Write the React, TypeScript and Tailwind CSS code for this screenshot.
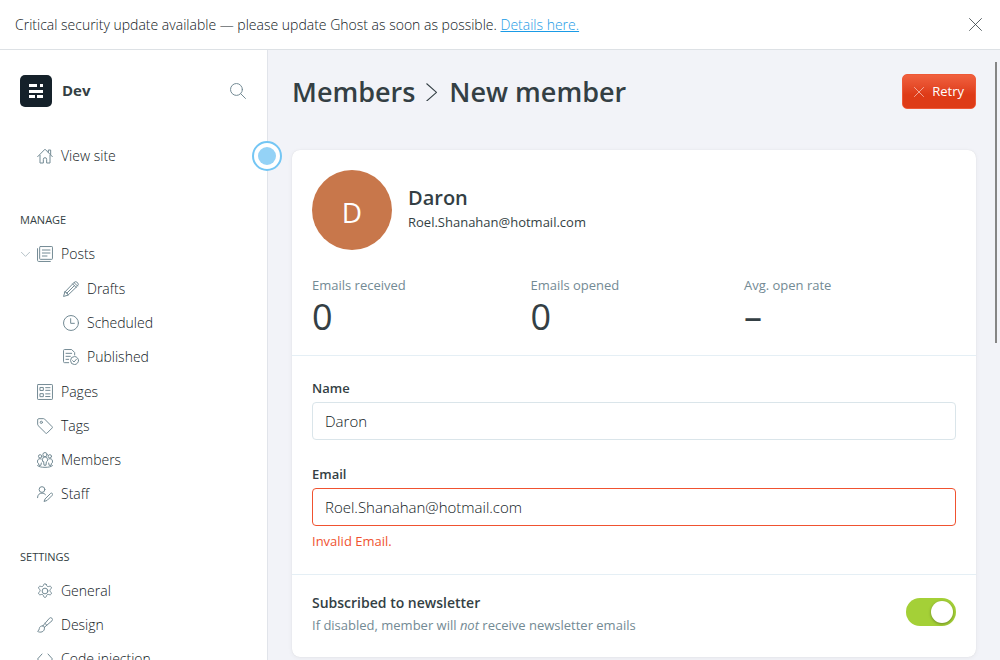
import { useState } from 'react';
import type { ReactNode } from 'react';

function Icon({ children, className = 'size-4 text-[#738a94]' }: { children: ReactNode; className?: string }) {
  return (
    <svg
      viewBox="0 0 24 24"
      className={`shrink-0 ${className}`}
      fill="none"
      stroke="currentColor"
      strokeWidth="1.5"
      strokeLinecap="round"
      strokeLinejoin="round"
      aria-hidden="true"
    >
      {children}
    </svg>
  );
}

const icons = {
  home: (
    <>
      <path d="M1 13 12 1.800 23 13" />
      <path d="M4.500 11v11.500h5V17a2.500 2.500 0 0 1 5 0v5.500h5V11" />
      <path d="M17 6.500V3h3.500v7" />
    </>
  ),
  posts: (
    <>
      <rect x="4" y=".8" width="19.200" height="19.200" rx="1" />
      <path d="M20 23.200H2.500A1.700 1.700 0 0 1 .8 21.500V4M8 6h11.500M8 10.500h11.500M8 15h7" />
    </>
  ),
  drafts: (
    <>
      <path d="m2.800 16.500 13.700-14.200a3.600 3.600 0 0 1 5.200 0 3.600 3.600 0 0 1 0 5.200L7.500 21.200l-6.700 2 2-6.700Z" />
      <path d="m14.500 4.400 5.200 5.200M2.800 16.500c2.500 0 4.700 2 4.700 4.700M5.500 18.500 17 7M16.500 2.300l5.200 5.200" />
    </>
  ),
  scheduled: (
    <>
      <circle cx="12" cy="12" r="11.200" />
      <path d="M11.500 5.500v7h5.500" />
    </>
  ),
  published: (
    <>
      <path d="M8.500 20.500H2.300A1.500 1.500 0 0 1 .8 19V2.300A1.500 1.500 0 0 1 2.300.8H13l4.500 4.500V9" />
      <path d="M4.500 6.500h8.500M4.500 11h6.500M4.500 15.500h4" />
      <circle cx="17.300" cy="17.300" r="6" />
      <path d="m14.500 17.500 2 2 3.700-4.200" />
    </>
  ),
  pages: (
    <>
      <rect x=".8" y=".8" width="22.400" height="22.400" rx="1" />
      <path d="M5 5.200h4.500v4.500H5zM5 14.500h4.500V19H5zM13 5.500h6.500M13 9.500h6.500M13 14.800h6.500M13 18.800h6.500" />
    </>
  ),
  tags: (
    <>
      <path d="M1 2.500A1.500 1.500 0 0 1 2.500 1H10a2 2 0 0 1 1.400.6L22.600 13a1.500 1.500 0 0 1 0 2.100l-7.500 7.500a1.500 1.500 0 0 1-2.100 0L1.600 11.300A2 2 0 0 1 1 9.900Z" />
      <circle cx="6.500" cy="6.500" r="1.700" />
    </>
  ),
  members: (
    <>
      <circle cx="12" cy="4" r="3.200" />
      <path d="M8.300 13.500V11a3.700 3.700 0 0 1 7.400 0v2.500l-1.700 1.300-.5 5h-3l-.5-5Z" />
      <circle cx="4.700" cy="6.500" r="2.500" />
      <circle cx="19.300" cy="6.500" r="2.500" />
      <path d="M6.500 10.500c-2.600-1.500-5.700.2-5.700 3V16l1.500 1 .5 3h3l.7-3.500M17.500 10.500c2.600-1.500 5.700.2 5.700 3V16l-1.500 1-.5 3h-3l-.7-3.500M.8 20.500c2 1.700 6 2.500 11.200 2.500s9.200-.8 11.200-2.500" />
    </>
  ),
  staff: (
    <>
      <circle cx="7.500" cy="5.300" r="4.300" />
      <path d="M.8 17.500c0-4.500 3-6.800 6.700-6.800 2.300 0 4 .9 5.200 2.300" />
      <path d="m12.500 19 8-8a1.900 1.900 0 0 1 2.600 2.700l-8 8-4 1.300Z" />
    </>
  ),
  general: (
    <>
      <circle cx="12" cy="12" r="4.300" />
      <path d="m13.900 2.300.7 1.700a2.300 2.300 0 0 0 2.700 1.300l1.800-.4a2.100 2.100 0 0 1 2 3.400l-1.200 1.500a2.300 2.300 0 0 0 0 2.900l1.200 1.500a2.100 2.100 0 0 1-2 3.400l-1.800-.4a2.300 2.300 0 0 0-2.700 1.300l-.7 1.900a2.100 2.100 0 0 1-3.800 0l-.7-1.900a2.300 2.300 0 0 0-2.700-1.300l-1.800.4a2.100 2.100 0 0 1-2-3.400l1.200-1.500a2.300 2.300 0 0 0 0-2.900L2.900 8.300a2.100 2.100 0 0 1 2-3.400l1.800.4A2.300 2.300 0 0 0 9.400 4l.7-1.700a2.100 2.100 0 0 1 3.800 0Z" />
    </>
  ),
  design: (
    <>
      <path d="M8.800 13.300 18.500 2a2.700 2.700 0 0 1 4 3.700L11 15.500" />
      <path d="M8.800 13.300c1.500.2 2.300 1.200 2.400 2.600M8.800 13.300c-3-.2-5 1.300-5.300 4-.2 1.900-1 3.300-2.600 4.200 3.500 2.500 11.200 1.400 10.300-5.600M12 9.700l2.800 2.700" />
    </>
  ),
  code: <path d="M7.500 4.500.8 12l6.700 7.500M16.500 4.500l6.700 7.500-6.700 7.500" />,
};

function NavItem({ icon, label, nested, expandable }: { icon: ReactNode; label: string; nested?: boolean; expandable?: boolean }) {
  return (
    <li className={`flex h-[34px] items-center ${nested ? 'pl-[63px]' : 'pl-[37px]'}`}>
      {expandable && (
        <button type="button" aria-label="Toggle posts" className="-ml-4 flex w-4 items-center">
          <Icon className="h-[9px] w-[9px] text-[#aebbc2]">
            <path d="m1 6 11 11L23 6" strokeWidth="2.400" />
          </Icon>
        </button>
      )}
      <a href="#" className="flex items-center gap-2">
        <Icon>{icon}</Icon>
        <span className="font-light text-[#10181c]">{label}</span>
      </a>
    </li>
  );
}

function Stat({ label, value }: { label: string; value: string }) {
  return (
    <div className="flex-auto">
      <dt className="text-[13px] leading-5 text-[#738a94]">{label}</dt>
      <dd className="mt-[2px] text-4xl leading-10">{value}</dd>
    </div>
  );
}

export default function App() {
  const [name, setName] = useState('Daron');
  const [email, setEmail] = useState('Roel.Shanahan@hotmail.com');
  const [subscribed, setSubscribed] = useState(true);

  return (
    <div className="flex h-screen flex-col overflow-hidden bg-white font-['Open_Sans','Noto_Sans',sans-serif] text-sm text-[#343f44]">
      <div className="flex h-[50px] shrink-0 items-center justify-between border-b border-[#dde1e5] px-[15px]">
        <p className="font-light text-[#10181c]">
          Critical security update available — please update Ghost as soon as possible.{' '}
          <a href="#" className="text-[#1a9be6] underline">Details here.</a>
        </p>
        <button type="button" aria-label="Close" className="flex size-5 items-center justify-center">
          <Icon className="size-[13px] text-[#343f44]">
            <path d="m1 1 22 22M23 1 1 23" strokeWidth="1.500" />
          </Icon>
        </button>
      </div>

      <div className="relative flex min-h-0 flex-1">
        <aside className="relative w-[268px] shrink-0 border-r border-[#e1e4ea]">
          <nav className="h-full overflow-y-auto pt-[25px] [scrollbar-width:none]">
            <div className="flex items-center pr-[21px] pl-5">
              <svg viewBox="0 0 32 32" className="size-8" aria-hidden="true">
                <rect width="32" height="32" rx="5" fill="#15212a" />
                <path fill="#fff" d="M9 9h8v3H9zM20 9h3v3h-3zM9 15h14v3H9zM9 20h6v3H9zM17 20h6v3h-6z" />
              </svg>
              <span className="ml-[10px] flex-1 text-[15px] font-bold">Dev</span>
              <button type="button" aria-label="Search">
                <Icon className="size-4 text-[#738a94]">
                  <circle cx="9.700" cy="9.700" r="8.900" />
                  <path d="m16 16 7.200 7.200" />
                </Icon>
              </button>
            </div>
            <ul className="mt-8">
              <NavItem icon={icons.home} label="View site" />
            </ul>
            <h2 className="mt-[37px] mb-[7px] pl-5 text-[11px] leading-5">MANAGE</h2>
            <ul>
              <NavItem icon={icons.posts} label="Posts" expandable />
              <li className="py-px">
                <ul>
                  <NavItem icon={icons.drafts} label="Drafts" nested />
                  <NavItem icon={icons.scheduled} label="Scheduled" nested />
                  <NavItem icon={icons.published} label="Published" nested />
                </ul>
              </li>
              <NavItem icon={icons.pages} label="Pages" />
              <NavItem icon={icons.tags} label="Tags" />
              <NavItem icon={icons.members} label="Members" />
              <NavItem icon={icons.staff} label="Staff" />
            </ul>
            <h2 className="mt-9 mb-[7px] pl-5 text-[11px] leading-5">SETTINGS</h2>
            <ul>
              <NavItem icon={icons.general} label="General" />
              <NavItem icon={icons.design} label="Design" />
              <NavItem icon={icons.code} label="Code injection" />
            </ul>
          </nav>
          <button
            type="button"
            aria-label="Toggle sidebar"
            className="absolute top-[91px] -right-[15px] z-10 flex size-[30px] items-center justify-center rounded-full border-2 border-[#74c6f4] bg-white"
          >
            <span className="size-[18px] rounded-full bg-[#94d2f6]" />
          </button>
        </aside>

        <main className="min-w-0 flex-1 overflow-y-auto bg-[#f2f3f8] px-6 pt-6 pb-6 [scrollbar-width:none]">
          <header className="flex items-center justify-between">
            <h1 className="flex items-center text-[27px] leading-[35px] font-semibold">
              <a href="#">Members</a>
              <Icon className="mx-2 size-[18px] text-[#343f44]">
                <path d="m5 1 13 11.500L5 24" strokeWidth="1.400" />
              </Icon>
              New member
            </h1>
            <button
              type="button"
              className="flex h-[35px] items-center gap-2 rounded-[5px] border border-[#ee5836] bg-linear-to-b from-[#f0603e] to-[#de3b17] to-60% px-[11px] text-[13px] text-white"
            >
              <Icon className="size-[10px] text-white/80">
                <path d="m1 1 22 22M23 1 1 23" strokeWidth="1.600" />
              </Icon>
              Retry
            </button>
          </header>

          <section className="mt-[41px] rounded-lg bg-white shadow-[0_0_1px_rgba(0,0,0,0.12),0_1px_5px_rgba(0,0,0,0.05)]">
            <div className="px-5 pt-5 pb-[18px]">
              <div className="flex items-center gap-4">
                <div className="flex size-20 items-center justify-center rounded-full bg-[#c8774b] pt-1 text-[28px] leading-8 text-white">D</div>
                <div>
                  <h3 className="text-xl leading-6 font-semibold">Daron</h3>
                  <p className="text-[13px] leading-6">Roel.Shanahan@hotmail.com</p>
                </div>
              </div>
              <dl className="mt-[25px] flex">
                <Stat label="Emails received" value="0" />
                <Stat label="Emails opened" value="0" />
                <Stat label="Avg. open rate" value="–" />
              </dl>
            </div>

            <div className="border-t border-[#e5eff5] px-5 pt-[22px] pb-[23px]">
              <label htmlFor="name" className="block text-[13px] leading-5 font-semibold">Name</label>
              <input
                id="name"
                type="text"
                value={name}
                onChange={(e) => setName(e.target.value)}
                className="mt-1 block h-[38px] w-full rounded-[4px] border border-[#dae5ea] bg-white px-3 text-[15px] font-light text-[#10181c] outline-none"
              />
              <label htmlFor="email" className="mt-6 block text-[13px] leading-5 font-semibold">Email</label>
              <input
                id="email"
                type="email"
                value={email}
                aria-invalid="true"
                aria-describedby="email-error"
                onChange={(e) => setEmail(e.target.value)}
                className="mt-1 block h-[38px] w-full rounded-[4px] border border-[#f05230] bg-white px-3 text-[15px] font-light text-[#10181c] outline-none"
              />
              <p id="email-error" className="mt-[5px] text-[13px] leading-5 text-[#f05230]">Invalid Email.</p>
            </div>

            <div className="flex items-start justify-between border-t border-[#e5eff5] px-5 pt-[18px] pb-[22px]">
              <div>
                <label htmlFor="newsletter" className="block text-sm leading-5 font-semibold">Subscribed to newsletter</label>
                <p className="mt-[2px] text-[13px] leading-5 text-[#738a94]">
                  If disabled, member will <em>not</em> receive newsletter emails
                </p>
              </div>
              <input
                id="newsletter"
                type="checkbox"
                checked={subscribed}
                onChange={(e) => setSubscribed(e.target.checked)}
                className="mt-[5px] flex h-7 w-[50px] shrink-0 appearance-none items-center rounded-full bg-[#c5d2d9] px-[3px] before:size-[22px] before:rounded-full before:bg-white before:shadow-[0_1px_3px_rgba(0,0,0,0.35)] before:content-[''] checked:justify-end checked:bg-[#a4d037]"
              />
            </div>
          </section>
        </main>
        <div className="absolute top-3 right-[3px] h-[281px] w-[2px] bg-[#858585]" />
      </div>
    </div>
  );
}
